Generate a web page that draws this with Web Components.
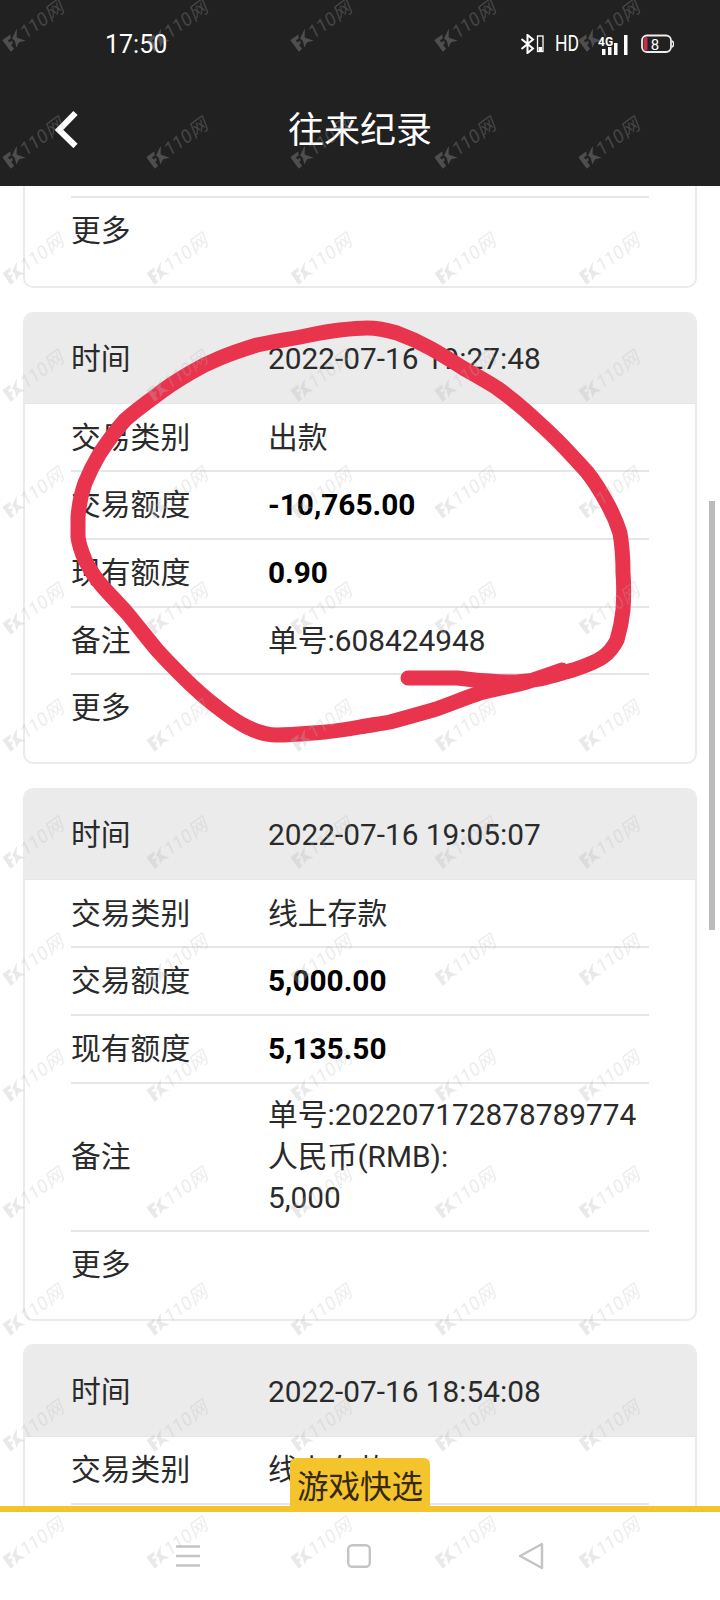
<!DOCTYPE html>
<html lang="zh"><head><meta charset="utf-8"><title>往来纪录</title>
<style>
html,body{margin:0;padding:0;background:#fff}
body{width:720px;height:1600px;overflow:hidden;font-family:Roboto,"Noto Sans CJK SC",sans-serif;color:#2a2a2a}
</style></head>
<body>
<x-app>
  <x-status slot="top"></x-status>
  <x-navbar slot="top">往来纪录</x-navbar>
  <x-card cut>
    <x-row border last first label="更多"></x-row>
  </x-card>
  <x-card>
    <x-row head label="时间">2022-07-16 19:27:48</x-row>
    <x-row label="交易类别">出款</x-row>
    <x-row border label="交易额度"><b>-10,765.00</b></x-row>
    <x-row border label="现有额度"><b>0.90</b></x-row>
    <x-row border label="备注">单号:608424948</x-row>
    <x-row border last label="更多"></x-row>
  </x-card>
  <x-card>
    <x-row head label="时间">2022-07-16 19:05:07</x-row>
    <x-row label="交易类别">线上存款</x-row>
    <x-row border label="交易额度"><b>5,000.00</b></x-row>
    <x-row border label="现有额度"><b>5,135.50</b></x-row>
    <x-row border tall label="备注">单号:202207172878789774<br>人民币(RMB):<br>5,000</x-row>
    <x-row border last label="更多"></x-row>
  </x-card>
  <x-card>
    <x-row head label="时间">2022-07-16 18:54:08</x-row>
    <x-row label="交易类别">线上存款</x-row>
    <x-row border label="交易额度"><b>5,000.00</b></x-row>
  </x-card>
  <x-footer slot="bottom">游戏快选</x-footer>
  <x-scribble slot="over"></x-scribble>
  <x-watermark slot="over"></x-watermark>
</x-app>
<script>
function el(name,html){
  customElements.define(name,class extends HTMLElement{
    constructor(){super();this.attachShadow({mode:'open'});}
    connectedCallback(){if(!this.shadowRoot.firstChild)this.shadowRoot.innerHTML=typeof html==='function'?html(this):html;}
  });
}
el('x-app',`<style>
:host{display:flex;flex-direction:column;width:720px;height:1600px;position:relative;overflow:hidden}
.list{flex:1;min-height:0;overflow:hidden;display:flex;flex-direction:column;gap:23.6px;padding:0 23.500px 0 23px}
.list ::slotted(*){flex:none}
.bar{position:absolute;left:708.500px;top:501px;width:6.500px;height:429px;background:#bbb}
</style>
<slot name="top"></slot>
<div class="list"><slot></slot></div>
<slot name="bottom"></slot>
<div class="bar"></div>
<slot name="over"></slot>`);

el('x-status',`<style>
:host{display:flex;align-items:center;height:88px;background:#212121;color:#fff;padding:0 46px 0 105px;box-sizing:border-box}
.t{font:400 25px Roboto,sans-serif;flex:1}
svg{display:block;flex:none}
svg text{font-family:Roboto,sans-serif;fill:#fff}
.hd{display:block;flex:none;width:26px;margin-right:17px;font:400 22px/22px Roboto,sans-serif;transform:scaleX(.8);transform-origin:0 50%;white-space:nowrap}
</style>
<span class="t">17:50</span>
<svg width="24" height="20" viewBox="0 0 24 20" style="margin-right:11px"><path d="M1.500 5 L13 14.500 L7.500 19 V1 L13 5.500 L1.500 15" fill="none" stroke="#fff" stroke-width="2"/><rect x="17.500" y="2" width="5.500" height="15.500" fill="none" stroke="#fff" stroke-width="1.300"/><rect x="18.500" y="13" width="3.500" height="4" fill="#fff"/></svg>
<span class="hd">HD</span>
<svg width="30" height="22" viewBox="0 0 30 22" style="margin-right:13px"><text x="0" y="13" font-size="12" font-weight="700">4G</text><rect x="4" y="16" width="3.500" height="6" fill="#fff"/><rect x="10" y="14" width="3.500" height="8" fill="#fff"/><rect x="16" y="10" width="3.500" height="12" fill="#fff"/><rect x="26" y="2" width="3.500" height="20" fill="#fff"/></svg>
<svg width="33" height="20" viewBox="0 0 33 20"><rect x="1" y="1.500" width="29" height="16.500" rx="5" fill="none" stroke="#eee" stroke-width="1.800"/><rect x="2.500" y="3" width="4" height="13.500" rx="1.500" fill="#c03048"/><path d="M31 7 a3.500 3.500 0 0 1 0 6" fill="none" stroke="#eee" stroke-width="1.500"/><text x="14" y="15.500" font-size="15" text-anchor="middle">8</text></svg>`);

el('x-navbar',`<style>
:host{display:flex;align-items:center;justify-content:center;position:relative;height:78px;padding-bottom:20px;background:#212121;color:#fff;font:400 36px Roboto,"Noto Sans CJK SC",sans-serif}
svg{position:absolute;left:52px;top:22px}
</style>
<svg width="28" height="38" viewBox="0 0 28 38"><path d="M23.500 3 L7 20 L23.500 36" fill="none" stroke="#fff" stroke-width="6"/></svg>
<slot></slot>`);

el('x-card',`<style>
:host{display:block;background:#fff;border:2px solid #e9ebed;border-radius:10px;overflow:hidden;box-sizing:border-box;font:400 29.800px/41.600px Roboto,"Noto Sans CJK SC",sans-serif;color:#2a2a2a}
:host([cut]){border-top:0;border-radius:0 0 10px 10px;padding-top:9.800px}
</style><slot></slot>`);

el('x-row',t=>`<style>
:host{display:block;font:inherit;color:inherit}
.w{display:grid;grid-template-columns:197px 1fr;align-items:center;padding:12.200px 0;margin:0 46px 0 46px;box-sizing:border-box}
:host([border]) .w{border-top:2px solid #e4e6e8;padding:12px 0}
:host([tall]) .w{padding:10.600px 0}
:host([last]) .w{padding-bottom:33.500px}
:host([first]) .w{padding-bottom:35px}
:host([head]){background:#ebebeb;border-bottom:1.500px solid #e4e6e8}
:host([head]) .w{padding:24.500px 0 23.400px}
::slotted(b){font-weight:700;color:#000}
</style><div class="w"><span>${t.getAttribute('label')||''}</span><span><slot></slot></span></div>`);

el('x-footer',`<style>
:host{display:flex;justify-content:center;align-items:center;gap:147px;flex:none;height:94px;box-sizing:border-box;border-top:6px solid #f2c52d;background:#fff;position:relative}
.tab{position:absolute;left:290px;bottom:100%;width:140px;height:54px;border-radius:6px 6px 0 0;background:#f3c42c;color:#37280c;font:400 31.500px/54px Roboto,"Noto Sans CJK SC",sans-serif;text-align:center;padding-top:3px;box-sizing:border-box}
svg{display:block;flex:none}
</style>
<div class="tab"><slot></slot></div>
<svg width="24" height="24" viewBox="0 0 24 24"><path d="M0 2.500H24M0 12H24M0 21.500H24" stroke="#c4c4c4" stroke-width="2.400"/></svg>
<svg width="24" height="24" viewBox="0 0 24 24"><rect x="1.200" y="1.200" width="21.600" height="21.600" rx="4" fill="none" stroke="#c4c4c4" stroke-width="2.400"/></svg>
<svg width="26" height="28" viewBox="0 0 26 28"><path d="M24 2 V26 L2 14 Z" fill="none" stroke="#c4c4c4" stroke-width="2.400" stroke-linejoin="round"/></svg>`);

el('x-scribble',`<style>
:host{position:absolute;left:0;top:0;width:720px;height:1600px;pointer-events:none}
svg{display:block}
</style>
<svg width="720" height="1600" viewBox="0 0 720 1600"><g fill="none" stroke="#e9344e" stroke-linecap="round" stroke-linejoin="round">
<path stroke-width="15" d="M408 678 C430 678 445 678 457 678 C475 680 490 682 507 682 C520 682 530 681 540 679 C552 676 562 673 573 670 C585 666 596 662 603 657 C610 652 614 646 617 640 C620 630 622 620 623 610 C624 595 624 585 623 573 C623 558 622 545 620 533 C616 520 612 512 607 503 C601 492 595 482 587 472 C577 461 567 450 557 440 C547 430 537 421 527 412 C517 403 507 395 497 388 C486 381 475 375 463 368 C452 361 441 354 430 348 C419 342 408 337 397 333 C387 330 377 328 367 328 C358 328 349 329 340 330 C330 331 320 333 310 335 C292 339 274 341 257 345 C244 349 232 353 220 358 C210 362 200 367 190 373 C178 380 167 387 157 395 C146 403 135 411 125 420 C116 430 108 441 100 453 C94 463 89 473 85 483 C81 494 79 505 78 517 C78 524 78 531 78 537 C79 545 82 553 85 560 C90 570 96 579 103 587 C111 596 119 604 127 613 C137 625 147 638 157 650 C166 660 174 668 183 677 C194 688 205 698 217 707 C227 715 237 722 247 727 C257 732 267 735 277 735 C289 735 301 734 313 733 C329 732 344 730 360 727 C370 725 380 724 390 722 C405 718 419 714 433 710 C449 705 464 698 480 693 C496 689 512 686 527 682 C539 678 551 674 562 670"/>
</g></svg>`);

el('x-watermark',()=>{
  const one=`<div class="m"><svg width="19" height="16" viewBox="0 0 21 18"><path d="M0 1H11L9 5H5V8H9L7 11H5V17H0ZM10 6 L21 0 L15 8 L21 17 L14 14 L8 17 L11 10Z"/></svg><span>110网</span></div>`;
  return `<style>
:host{position:absolute;left:-38px;top:-32px;display:grid;grid-template-columns:repeat(5,144px);grid-auto-rows:116.700px;pointer-events:none}
.m{display:flex;align-items:center;justify-content:center;gap:1px;transform:rotate(-36deg);font:italic 400 18.500px/14px Roboto,"Noto Sans CJK SC",sans-serif;color:rgba(181,181,181,.27);white-space:nowrap}
svg{fill:rgba(181,181,181,.3);flex:none}
</style>`+one.repeat(70);
});
</script>
</body></html>
